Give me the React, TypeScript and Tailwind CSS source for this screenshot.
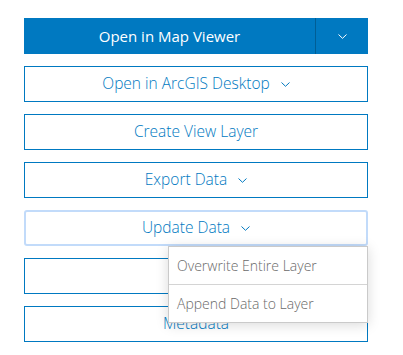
import React from "react";

const Chevron = ({ className = "" }: { className?: string }) => (
  <svg width="9" height="5" viewBox="0 0 9 5" className={className} fill="none">
    <path d="M0.5 0.5 L4.5 4.3 L8.5 0.5" stroke="currentColor" strokeWidth="1" />
  </svg>
);

const Outline = ({ label, chevron }: { label: string; chevron?: boolean }) => (
  <button className="flex h-9 w-full items-center justify-center gap-[11px] border border-[#0079c1] bg-white text-[15.5px] font-light text-[#0079c1]">
    <span>{label}</span>
    {chevron && <Chevron className="mt-[1px]" />}
  </button>
);

export default function App() {
  return (
    <div
      className="h-[355px] w-[403px] bg-white pl-6 pt-[18px]"
      style={{ fontFamily: '"Open Sans", "Noto Sans", sans-serif' }}
    >
      <div className="flex w-[344px] flex-col gap-3">
        <div className="flex h-9 w-full bg-[#0079c1] text-white">
          <button className="flex flex-1 items-center justify-center text-[15px]">Open in Map Viewer</button>
          <div className="w-px bg-[#005e95]" />
          <button className="flex w-[52px] items-center justify-center">
            <Chevron />
          </button>
        </div>
        <Outline label="Open in ArcGIS Desktop" chevron />
        <Outline label="Create View Layer" />
        <Outline label="Export Data" chevron />
        <div className="relative">
          <button className="flex h-9 w-full items-center justify-center gap-[11px] rounded-[3px] border-2 border-[#c2dbfa] bg-white text-[15.5px] font-light text-[#0079c1]">
            <span>Update Data</span>
            <Chevron className="mt-[1px]" />
          </button>
          <div className="absolute right-0 top-9 z-10 w-[200px] border border-[#cacaca] bg-white text-[14px] font-light text-[#6a6a6a] shadow-[0_2px_12px_rgba(0,0,0,0.15)]">
            <div className="flex h-[38px] items-center border-b border-[#d4d4d4] pl-2">Overwrite Entire Layer</div>
            <div className="flex h-[37px] items-center pl-2">Append Data to Layer</div>
          </div>
        </div>
        <Outline label="" />
        <Outline label="Metadata" />
      </div>
    </div>
  );
}
